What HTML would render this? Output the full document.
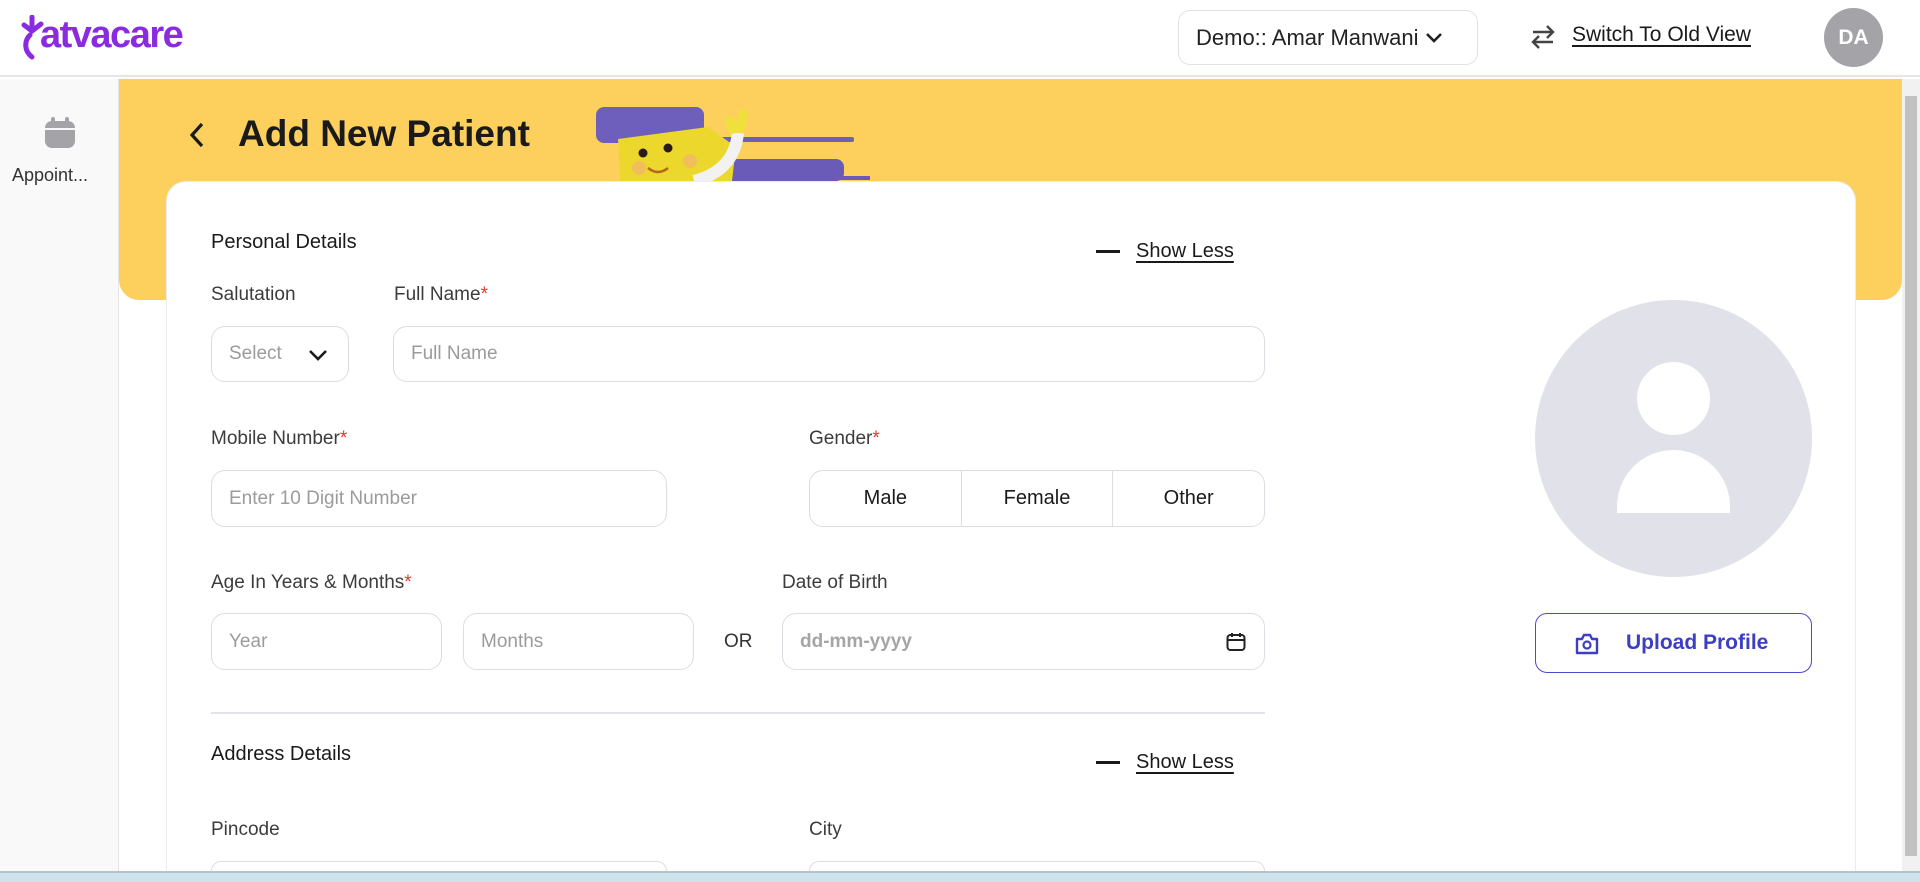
<!DOCTYPE html>
<html style="overflow:hidden;height:882px"><head><meta charset="utf-8"><style>
*{box-sizing:border-box;margin:0;padding:0}
body{width:1920px;height:882px;overflow:hidden;background:#fff;font-family:"Liberation Sans",sans-serif;color:#222;position:relative}
.a{position:absolute}
.lbl{position:absolute;font-size:19px;color:#3c3c3c}
.req{color:#e53935}
.inp{position:absolute;border:1px solid #dcdce3;border-radius:14px;background:#fff;font-size:19px;color:#9b9b9b;padding-left:17px;display:flex;align-items:center}
.sec{position:absolute;font-size:20px;color:#1a1a1a;font-weight:500}
.sl{position:absolute;font-size:20px;color:#1a1a1a;text-decoration:underline;text-underline-offset:4px}
.dash{position:absolute;width:24px;height:3px;background:#1a1a1a}
</style></head><body>
<!-- header -->
<div class="a" style="left:0;top:0;width:1920px;height:77px;border-bottom:2px solid #e6e6ea;background:#fff"></div>
<svg class="a" style="left:18px;top:15px" width="32" height="45" viewBox="0 0 32 45"><path d="M14 2v12M6 10l8 6 9-7M12 20c-6 6-6 16 2 22" stroke="#8a2be2" stroke-width="5" fill="none" stroke-linecap="round"/></svg>
<div class="a" style="left:40px;top:14px;font-size:38px;font-weight:bold;color:#8a2be2;letter-spacing:-1.5px">atvacare</div>
<div class="a" style="left:1178px;top:10px;width:300px;height:55px;border:1px solid #e2e2e6;border-radius:12px;font-size:22px;color:#222;padding-left:17px;display:flex;align-items:center">Demo:: Amar Manwani
<svg style="margin-left:6px" width="18" height="12" viewBox="0 0 18 12"><path d="M2 2l7 7 7-7" stroke="#222" stroke-width="2.6" fill="none"/></svg></div>
<svg class="a" style="left:1529px;top:22px" width="28" height="30" viewBox="0 0 28 30"><path d="M4 10h20M18 4l6 6-6 6M24 20H4M10 14l-6 6 6 6" stroke="#444" stroke-width="2.4" fill="none"/></svg>
<div class="a" style="left:1572px;top:23px;font-size:21px;color:#1a1a1a;text-decoration:underline;text-underline-offset:4px">Switch To Old View</div>
<div class="a" style="left:1824px;top:8px;width:59px;height:59px;border-radius:50%;background:#a3a3a8;color:#fff;font-weight:bold;font-size:21px;display:flex;align-items:center;justify-content:center">DA</div>
<!-- sidebar -->
<div class="a" style="left:0;top:79px;width:119px;height:792px;background:#f9f9f9;border-right:1px solid #e4e4e4"></div>
<svg class="a" style="left:43px;top:117px" width="34" height="33" viewBox="0 0 34 33"><rect x="2" y="4" width="30" height="27" rx="7" fill="#a3a3a8"/><rect x="8" y="0" width="4" height="7" rx="2" fill="#a3a3a8"/><rect x="22" y="0" width="4" height="7" rx="2" fill="#a3a3a8"/><rect x="2" y="11" width="30" height="2" fill="#f9f9f9"/></svg>
<div class="a" style="left:12px;top:165px;font-size:18px;color:#333">Appoint...</div>
<!-- scrollbar -->
<div class="a" style="left:1902px;top:79px;width:18px;height:792px;background:#f1f1f1"></div>
<div class="a" style="left:1905px;top:96px;width:12px;height:760px;background:#c1c1c1"></div>
<!-- banner -->
<div class="a" style="left:119px;top:79px;width:1783px;height:221px;background:#fdd05e;border-radius:0 0 20px 20px"></div>
<svg class="a" style="left:186px;top:120px" width="22" height="30" viewBox="0 0 22 30"><path d="M16 4L6 15l10 11" stroke="#1a1a1a" stroke-width="3.2" fill="none"/></svg>
<div class="a" style="left:238px;top:113px;font-size:37px;font-weight:bold;color:#1a1a1a">Add New Patient</div>
<svg class="a" style="left:594px;top:104px" width="282" height="77" viewBox="0 0 282 77">
<rect x="2" y="3" width="108" height="36" rx="8" fill="#6f5fbd"/>
<rect x="100" y="33" width="160" height="5" rx="2" fill="#6f5fbd"/>
<rect x="130" y="55" width="120" height="22" rx="8" fill="#6a5bb8"/>
<rect x="240" y="72" width="36" height="4" fill="#6a5bb8"/>
<path d="M24 35l90-12 28 20-4 34H26z" fill="#ecd72c"/>
<circle cx="49" cy="49" r="4.5" fill="#2a1a1a"/><circle cx="74" cy="44" r="4.5" fill="#2a1a1a"/>
<circle cx="45" cy="64" r="7" fill="#f0be5a"/><circle cx="96" cy="57" r="7" fill="#f0be5a"/>
<path d="M54 64q10 8 20 0" stroke="#b5651d" stroke-width="2.5" fill="none"/>
<path d="M100 77q40-10 44-48" stroke="#f2f2f2" stroke-width="12" fill="none"/>
<path d="M136 30l-6-14 8-4 4 8 4-16 8 4-4 20z" fill="#efe03a"/>
</svg>
<!-- card -->
<div class="a" style="left:166px;top:181px;width:1690px;height:690px;background:#fff;border-radius:20px 20px 0 0;border:1px solid #ececec;border-bottom:none"></div>
<div class="sec" style="left:211px;top:231px">Personal Details</div>
<div class="dash" style="left:1096px;top:250px"></div>
<div class="sl" style="left:1136px;top:240px">Show Less</div>
<div class="lbl" style="left:211px;top:284px">Salutation</div>
<div class="lbl" style="left:394px;top:284px">Full Name<span class="req">*</span></div>
<div class="inp" style="left:211px;top:326px;width:138px;height:56px">Select
<svg style="position:absolute;left:96px;top:22px" width="20" height="13" viewBox="0 0 20 13"><path d="M2 2l8 8 8-8" stroke="#1a1a1a" stroke-width="2.6" fill="none"/></svg></div>
<div class="inp" style="left:393px;top:326px;width:872px;height:56px">Full Name</div>
<div class="lbl" style="left:211px;top:428px">Mobile Number<span class="req">*</span></div>
<div class="inp" style="left:211px;top:470px;width:456px;height:57px">Enter 10 Digit Number</div>
<div class="lbl" style="left:809px;top:428px">Gender<span class="req">*</span></div>
<div class="a" style="left:809px;top:470px;width:456px;height:57px;border:1px solid #dcdce3;border-radius:14px;display:flex;font-size:20px;color:#1a1a1a">
<div style="flex:1;display:flex;align-items:center;justify-content:center;border-right:1px solid #dcdce3">Male</div>
<div style="flex:1;display:flex;align-items:center;justify-content:center;border-right:1px solid #dcdce3">Female</div>
<div style="flex:1;display:flex;align-items:center;justify-content:center">Other</div></div>
<div class="lbl" style="left:211px;top:572px">Age In Years &amp; Months<span class="req">*</span></div>
<div class="lbl" style="left:782px;top:572px">Date of Birth</div>
<div class="inp" style="left:211px;top:613px;width:231px;height:57px">Year</div>
<div class="inp" style="left:463px;top:613px;width:231px;height:57px">Months</div>
<div class="a" style="left:724px;top:631px;font-size:19px;color:#333">OR</div>
<div class="inp" style="left:782px;top:613px;width:483px;height:57px;font-weight:bold;color:#a5a5a5">dd-mm-yyyy
<svg style="position:absolute;right:18px;top:18px" width="20" height="20" viewBox="0 0 20 20"><rect x="1.5" y="3" width="17" height="15" rx="3" stroke="#222" stroke-width="2" fill="none"/><path d="M1.5 8h17M6 1v4M14 1v4" stroke="#222" stroke-width="2"/></svg></div>
<div class="a" style="left:211px;top:712px;width:1054px;height:2px;background:#e3e3ea"></div>
<div class="sec" style="left:211px;top:743px">Address Details</div>
<div class="dash" style="left:1096px;top:761px"></div>
<div class="sl" style="left:1136px;top:751px">Show Less</div>
<div class="lbl" style="left:211px;top:819px">Pincode</div>
<div class="lbl" style="left:809px;top:819px">City</div>
<div class="a" style="left:211px;top:861px;width:456px;height:10px;border:1px solid #dcdce3;border-bottom:none;border-radius:14px 14px 0 0"></div>
<div class="a" style="left:809px;top:861px;width:456px;height:10px;border:1px solid #dcdce3;border-bottom:none;border-radius:14px 14px 0 0"></div>
<!-- avatar -->
<div class="a" style="left:1535px;top:300px;width:277px;height:277px;border-radius:50%;background:#e1e2e9"></div>
<div class="a" style="left:1637px;top:362px;width:73px;height:73px;border-radius:50%;background:#fff"></div>
<div class="a" style="left:1617px;top:450px;width:113px;height:63px;border-radius:57px 57px 0 0;background:#fff"></div>
<div class="a" style="left:1535px;top:613px;width:277px;height:60px;border:1.5px solid #4a4ad0;border-radius:12px;display:flex;align-items:center;color:#3e3ec4;font-weight:bold;font-size:21px">
<svg style="position:absolute;left:38px;top:18px" width="26" height="24" viewBox="0 0 26 24"><path d="M3 7h5l2-4h6l2 4h5v14H3z" stroke="#3e3ec4" stroke-width="2.4" fill="none" stroke-linejoin="round"/><circle cx="13" cy="13" r="3.5" stroke="#3e3ec4" stroke-width="2.2" fill="none"/></svg>
<span style="position:absolute;left:90px">Upload Profile</span></div>
<!-- taskbar strip -->
<div class="a" style="left:0;top:871px;width:1920px;height:11px;background:#cfe3ec;border-top:2px solid #b0c4cc"></div>
</body></html>
